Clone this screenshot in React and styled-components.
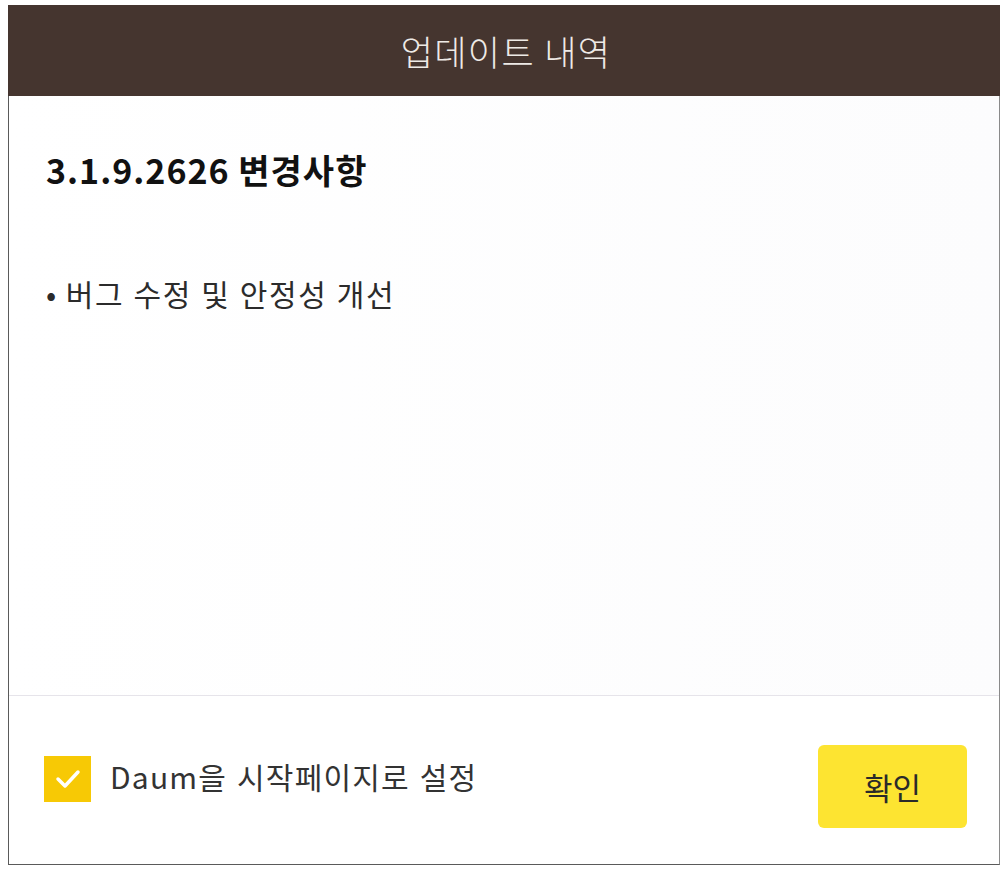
import React, { useState } from "react";
import styled, { createGlobalStyle } from "styled-components";

const Global = createGlobalStyle`
  html, body { margin: 0; padding: 0; background: #ffffff; }
  body { font-family: "Noto Sans CJK KR", "Noto Sans", sans-serif; }
`;

const Frame = styled.div`
  margin: 5px 0 0 8px;
  width: 992px;
  height: 860px;
  box-sizing: border-box;
  display: flex;
  flex-direction: column;
  border-left: 1.5px solid #5a5a5a;
  border-right: 1.5px solid #8a8a8a;
  border-bottom: 1.5px solid #5a5a5a;
  background: #fff;
`;

const Header = styled.header`
  height: 91px;
  flex: none;
  margin-left: -1.5px;
  margin-right: -1.5px;
  background: #45352f;
  display: flex;
  align-items: center;
  justify-content: center;
`;

const Title = styled.h1`
  margin: 0 0 0 4px;
  font-size: 35px;
  font-weight: 300;
  color: #eeeae6;
  letter-spacing: 1.4px;
  line-height: 1;
`;

const Body = styled.main`
  flex: 1;
  padding: 54px 0 0 37px;
  background: linear-gradient(90deg, #ffffff 0%, #fcfcfd 100%);
`;

const Heading = styled.h2`
  margin: 0;
  font-size: 34px;
  font-weight: 700;
  color: #111;
  line-height: 1.2;
  letter-spacing: 1px;
`;

const List = styled.ul`
  list-style: none;
  margin: 84px 0 0 0;
  padding: 0;
`;

const Item = styled.li`
  font-size: 30px;
  color: #2b2b2b;
  line-height: 1.2;
  letter-spacing: 1.6px;
  word-spacing: 1px;
  &::before {
    content: "•";
    margin-right: 8px;
  }
`;

const Footer = styled.footer`
  flex: none;
  height: 169px;
  border-top: 1.5px solid #e6e4ea;
  display: flex;
  align-items: center;
  justify-content: space-between;
  padding: 0 32px 0 35px;
  box-sizing: border-box;
`;

const CheckRow = styled.label`
  display: flex;
  align-items: center;
  gap: 19px;
  cursor: pointer;
  margin-top: -2px;
`;

const Box = styled.span`
  width: 47px;
  height: 46px;
  background: ${(p) => (p.$on ? "#f7c905" : "#fff")};
  border: ${(p) => (p.$on ? "none" : "1px solid #aaa")};
  display: flex;
  align-items: center;
  justify-content: center;
`;

const Label = styled.span`
  font-size: 30px;
  color: #333;
  line-height: 1;
  letter-spacing: 1.2px;
  word-spacing: 2px;
  margin-top: -6px;
`;

const Button = styled.button`
  width: 149px;
  height: 83px;
  margin-top: 12px;
  border: none;
  border-radius: 6px;
  background: #fde431;
  font-family: inherit;
  font-size: 31px;
  color: #2a2a2a;
  cursor: pointer;
`;

export default function App() {
  const [on, setOn] = useState(true);
  return (
    <>
      <Global />
      <Frame>
        <Header>
          <Title>업데이트 내역</Title>
        </Header>
        <Body>
          <Heading>3.1.9.2626 변경사항</Heading>
          <List>
            <Item>버그 수정 및 안정성 개선</Item>
          </List>
        </Body>
        <Footer>
          <CheckRow onClick={() => setOn(!on)}>
            <Box $on={on}>
              {on && (
                <svg width="28" height="22" viewBox="0 0 28 22">
                  <path d="M4 11 L11 18 L24 4" fill="none" stroke="#fff" strokeWidth="3.5" strokeLinecap="round" strokeLinejoin="round" />
                </svg>
              )}
            </Box>
            <Label>Daum을 시작페이지로 설정</Label>
          </CheckRow>
          <Button>확인</Button>
        </Footer>
      </Frame>
    </>
  );
}
